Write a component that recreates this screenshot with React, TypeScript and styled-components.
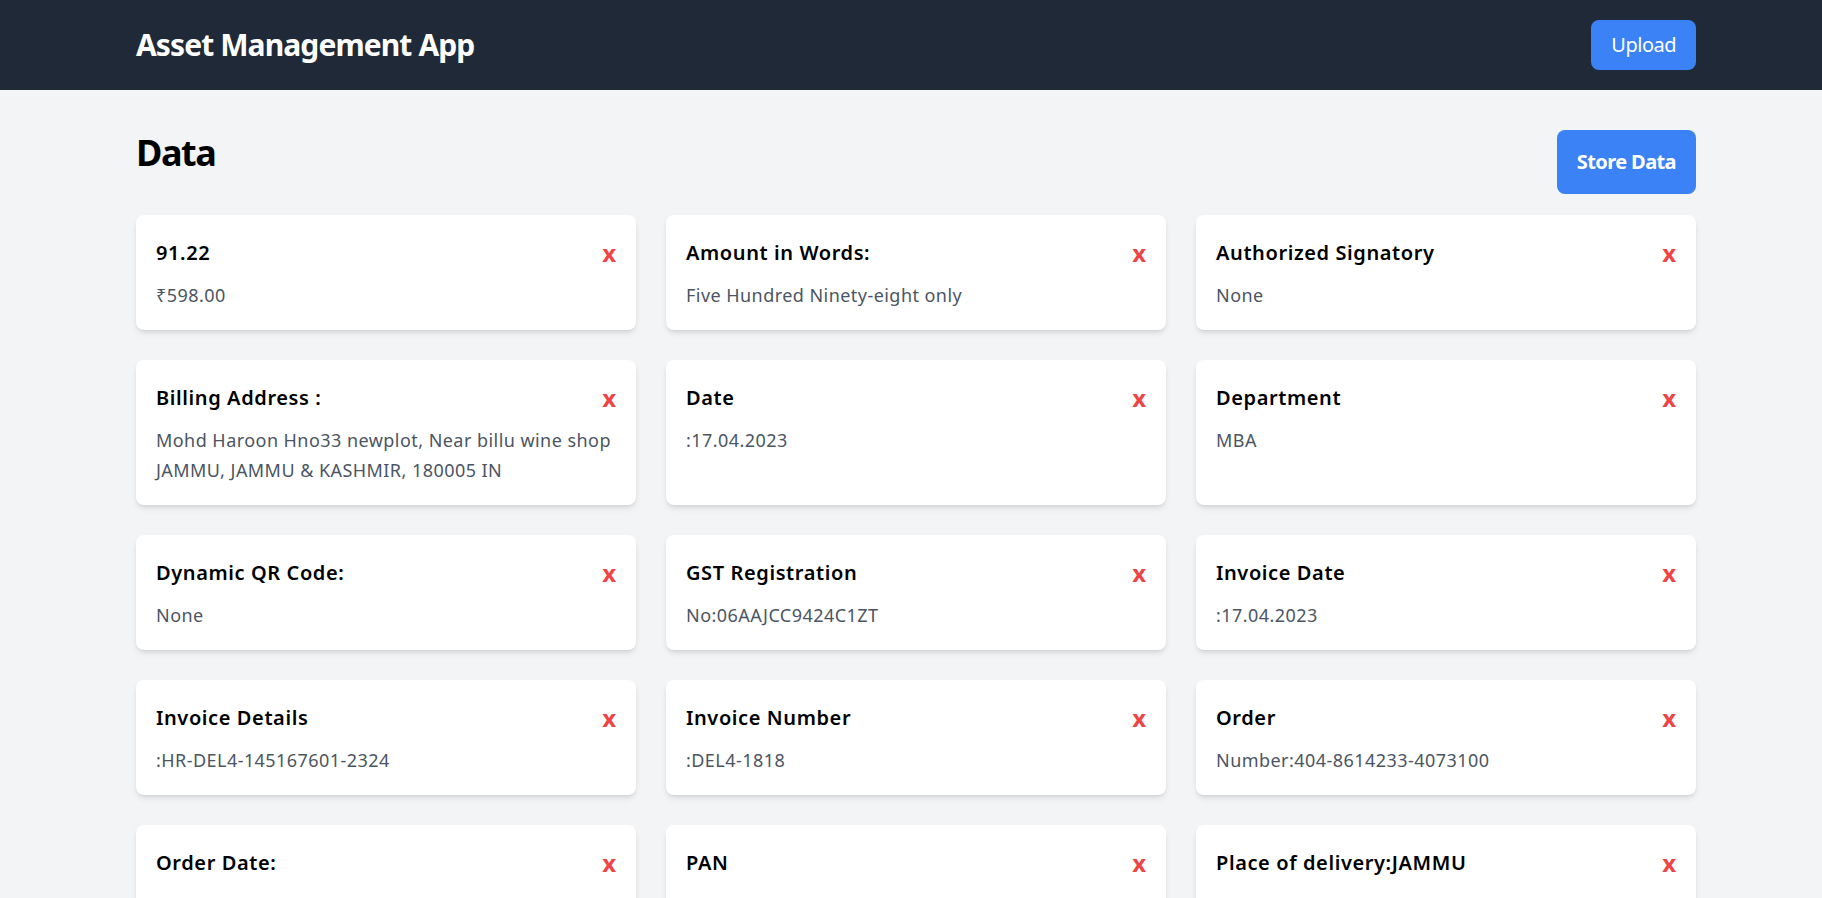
import React from "react";
import styled, { createGlobalStyle } from "styled-components";

const GlobalStyle = createGlobalStyle`
  * { box-sizing: border-box; }
  html, body {
    margin: 0;
    padding: 0;
    background: #f3f4f6;
    font-family: "Segoe UI", "Noto Sans", "Open Sans", sans-serif;
    color: #000;
  }
`;

const Header = styled.header`
  background: #1f2937;
  padding: 20px 126px 20px 136px;
  display: flex;
  align-items: center;
  justify-content: space-between;
`;

const Brand = styled.h1`
  margin: 0;
  color: #fff;
  font-size: 30px;
  line-height: 36px;
  font-weight: 700;
  letter-spacing: -0.9px;
`;

const BlueButton = styled.button<{ $bold?: boolean; $tall?: boolean }>`
  background: #3b82f6;
  color: #fff;
  border: none;
  border-radius: 8px;
  font-family: inherit;
  font-size: 20px;
  line-height: 28px;
  font-weight: ${(p) => (p.$bold ? 700 : 400)};
  letter-spacing: ${(p) => (p.$bold ? "-0.6px" : "-0.5px")};
  padding: ${(p) => (p.$tall ? "18px 20px" : "11px 20px")};
  cursor: pointer;
`;

const Main = styled.main`
  padding: 40px 126px 40px 136px;
`;

const TitleRow = styled.div`
  display: flex;
  align-items: flex-start;
  justify-content: space-between;
  margin-bottom: 21px;
`;

const PageTitle = styled.h2`
  margin: 0;
  font-size: 36px;
  line-height: 46px;
  font-weight: 700;
  letter-spacing: -1.4px;
`;

const CardGrid = styled.div`
  display: grid;
  grid-template-columns: repeat(3, 1fr);
  gap: 30px;
`;

const Card = styled.div`
  background: #fff;
  border-radius: 8px;
  box-shadow: 0 4px 6px -1px rgba(0, 0, 0, 0.1), 0 2px 4px -2px rgba(0, 0, 0, 0.1);
  padding: 22px 20px 20px;
`;

const CardHeader = styled.div`
  display: flex;
  align-items: center;
  justify-content: space-between;
  margin-bottom: 11px;
`;

const CardTitle = styled.h3`
  margin: 0;
  font-size: 20px;
  line-height: 28px;
  font-weight: 600;
  letter-spacing: 0.6px;
`;

const RemoveButton = styled.button`
  background: none;
  border: none;
  padding: 0;
  color: #ef4444;
  font-family: inherit;
  font-size: 24px;
  line-height: 32px;
  font-weight: 700;
  cursor: pointer;
`;

const CardValue = styled.p`
  margin: 0;
  color: #4b5563;
  font-size: 18px;
  line-height: 30px;
  letter-spacing: 0.45px;
`;

const items: { title: string; value: string }[] = [
  { title: "91.22", value: "₹598.00" },
  { title: "Amount in Words:", value: "Five Hundred Ninety-eight only" },
  { title: "Authorized Signatory", value: "None" },
  {
    title: "Billing Address :",
    value: "Mohd Haroon Hno33 newplot, Near billu wine shop JAMMU, JAMMU & KASHMIR, 180005 IN",
  },
  { title: "Date", value: ":17.04.2023" },
  { title: "Department", value: "MBA" },
  { title: "Dynamic QR Code:", value: "None" },
  { title: "GST Registration", value: "No:06AAJCC9424C1ZT" },
  { title: "Invoice Date", value: ":17.04.2023" },
  { title: "Invoice Details", value: ":HR-DEL4-145167601-2324" },
  { title: "Invoice Number", value: ":DEL4-1818" },
  { title: "Order", value: "Number:404-8614233-4073100" },
  { title: "Order Date:", value: "17.04.2023" },
  { title: "PAN", value: "No:AAJCC9424C" },
  { title: "Place of delivery:JAMMU", value: "None" },
];

export default function App() {
  return (
    <>
      <GlobalStyle />
      <Header>
        <Brand>Asset Management App</Brand>
        <BlueButton>Upload</BlueButton>
      </Header>
      <Main>
        <TitleRow>
          <PageTitle>Data</PageTitle>
          <BlueButton $bold $tall>
            Store Data
          </BlueButton>
        </TitleRow>
        <CardGrid>
          {items.map((item) => (
            <Card key={item.title}>
              <CardHeader>
                <CardTitle>{item.title}</CardTitle>
                <RemoveButton>x</RemoveButton>
              </CardHeader>
              <CardValue>{item.value}</CardValue>
            </Card>
          ))}
        </CardGrid>
      </Main>
    </>
  );
}
